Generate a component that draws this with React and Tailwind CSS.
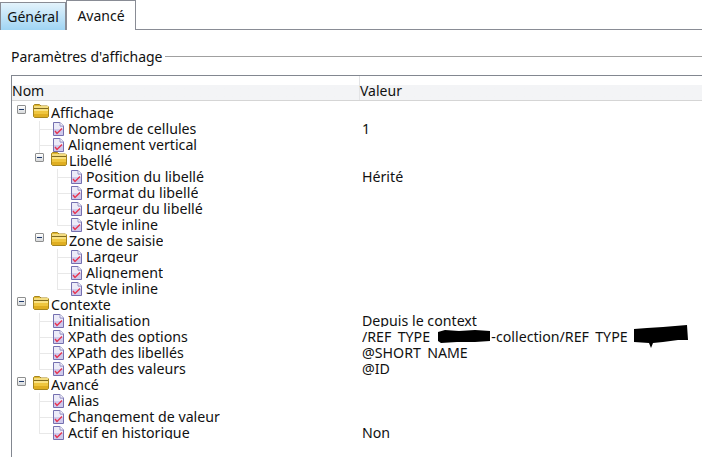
const rows = [
  { depth: 0, folder: true, name: 'Affichage' },
  { depth: 1, name: 'Nombre de cellules', value: '1' },
  { depth: 1, name: 'Alignement vertical' },
  { depth: 1, folder: true, name: 'Libellé' },
  { depth: 2, name: 'Position du libellé', value: 'Hérité' },
  { depth: 2, name: 'Format du libellé' },
  { depth: 2, name: 'Largeur du libellé' },
  { depth: 2, name: 'Style inline', last: true },
  { depth: 1, folder: true, name: 'Zone de saisie' },
  { depth: 2, name: 'Largeur' },
  { depth: 2, name: 'Alignement' },
  { depth: 2, name: 'Style inline', last: true },
  { depth: 0, folder: true, name: 'Contexte' },
  { depth: 1, name: 'Initialisation', value: 'Depuis le context' },
  { depth: 1, name: 'XPath des options', redacted: true },
  { depth: 1, name: 'XPath des libellés', value: '@SHORT_NAME' },
  { depth: 1, name: 'XPath des valeurs', value: '@ID', last: true },
  { depth: 0, folder: true, name: 'Avancé' },
  { depth: 1, name: 'Alias' },
  { depth: 1, name: 'Changement de valeur' },
  { depth: 1, name: 'Actif en historique', value: 'Non', last: true },
];

function FolderIcon() {
  return (
    <svg width="16" height="14" viewBox="0 0 16 14" className="-mt-px shrink-0">
      <path d="M.5 3V1.5L1.5 .5H6.5L8 2H14.5L15.5 3V12.5L14.5 13.5H1.5L.5 12.5Z" fill="#e2b930" stroke="#a5851f" />
      <rect x="1" y="2" width="14" height="2" fill="#f3dc80" />
      <rect x="1" y="4" width="14" height="1" fill="#7f6a20" />
      <rect x="1" y="5" width="14" height="2" fill="#fae283" />
      <rect x="1" y="7" width="14" height="3" fill="#efc63f" />
      <rect x="1" y="10" width="14" height="3" fill="#dfae22" />
    </svg>
  );
}

function ItemIcon() {
  return (
    <svg width="11" height="14" viewBox="0 0 11 14" className="mt-px shrink-0">
      <path d="M.5 .5H7L10.5 4V13.5H.5Z" fill="#cfcaec" stroke="#7570b0" />
      <path d="M1 1H7V5H10V7H1Z" fill="#ecebf8" />
      <path d="M7 .5V4H10.5" fill="#f6f6fc" stroke="#9a96c6" />
      <path d="M2 9L4 11.5L9 6.5" fill="none" stroke="#e8334f" strokeWidth="1.4" />
    </svg>
  );
}

function Toggle() {
  return (
    <span className="flex h-[9px] w-[9px] shrink-0 items-center justify-center rounded-[1px] border border-[#8e8f8f] bg-gradient-to-b from-white to-[#d8dadc]">
      <span className="h-px w-[5px] bg-[#1f3a6b]" />
    </span>
  );
}

function Connector({ last }) {
  if (last) {
    return <span className="block h-[9px] w-[14px] shrink-0 border-b border-l border-[#e8e8e8]" />;
  }
  return (
    <span className="flex h-4 w-[14px] shrink-0 items-center border-l border-[#e8e8e8]">
      <span className="h-px w-full bg-[#e8e8e8]" />
    </span>
  );
}

function Row({ row }) {
  return (
    <div className="flex h-4 text-[14.2px] leading-[16px] text-[#111]">
      <div className="flex w-[348px] items-start">
        {row.depth === 0 && <span className="ml-[5px] mr-[7px]"><Toggle /></span>}
        {row.depth === 1 && row.folder && <span className="ml-[23px] mr-[7px]"><Toggle /></span>}
        {row.folder && <span className="mr-[2px]"><FolderIcon /></span>}
        {row.depth === 1 && !row.folder && <span className="ml-[27px]"><Connector last={row.last} /></span>}
        {row.depth === 2 && <span className="ml-[45px]"><Connector last={row.last} /></span>}
        {!row.folder && <span className="mr-[4px]"><ItemIcon /></span>}
        {/* la ligne coupe le bas du texte comme dans la vraie grille */}
        <span className="h-[14px] overflow-hidden whitespace-nowrap">{row.name}</span>
      </div>
      <div className="relative flex flex-1 items-start whitespace-nowrap pl-[2px]">
        {row.redacted ? (
          <>
            <span className="h-[14px] overflow-hidden">/REF_TYPE_</span>
            <span className="w-[55px]" />
            <span className="h-[14px] overflow-hidden">-collection/REF_TYPE_</span>
            <svg width="54" height="14" viewBox="0 0 54 14" className="absolute left-[77px] top-px">
              <path d="M1 2L8 0L22 1L38 0L53 1L53 11L38 12L20 12L4 13L1 11Z" fill="#000" />
            </svg>
            <svg width="56" height="24" viewBox="0 0 56 24" className="absolute left-[273px] top-[-4px]">
              <path d="M1 4L14 3L30 2L54 0L55 15L45 15L30 17L20 18L18 23L16 18L1 17Z" fill="#000" />
            </svg>
          </>
        ) : (
          <span className="h-[14px] overflow-hidden">{row.value}</span>
        )}
      </div>
    </div>
  );
}

export default function App() {
  return (
    <div className="h-[457px] w-[702px] overflow-hidden bg-white font-['Noto_Sans','Open_Sans',sans-serif] text-[14px] text-[#111]">
      <div className="flex h-[30px] items-end border-b border-[#898c95]">
        <div className="mb-[-1px] flex h-[28px] w-[66px] items-center justify-center border-x border-t border-[#898c95] bg-gradient-to-b from-[#e3f3fc] to-[#9fd4f3]">Général</div>
        <div className="mb-[-1px] flex h-[30px] w-[70px] items-center justify-center border-x border-t border-[#898c95] bg-white">Avancé</div>
      </div>
      <div className="flex h-[45px] items-start pl-[11px] pt-[17px]">
        <span className="whitespace-nowrap leading-[20px]">Paramètres d'affichage</span>
        <span className="ml-[2px] mt-[9px] h-px flex-1 bg-[#a0a0a0]" />
      </div>
      <div className="ml-[11px] h-[382px] border-l border-t border-[#828790]">
        <div className="flex h-[25px] items-end border-b border-[#d5d5d5] bg-gradient-to-b from-white from-[36%] to-[#f3f4f6] to-[36%]">
          <div className="w-[347px] leading-[18px]">Nom</div>
          <div className="h-full flex-1 border-l border-[#e3e4e6] pt-[6px] leading-[18px]">Valeur</div>
        </div>
        <div className="pt-[4px]">
          {rows.map((row, i) => <Row key={i} row={row} />)}
        </div>
      </div>
    </div>
  );
}
